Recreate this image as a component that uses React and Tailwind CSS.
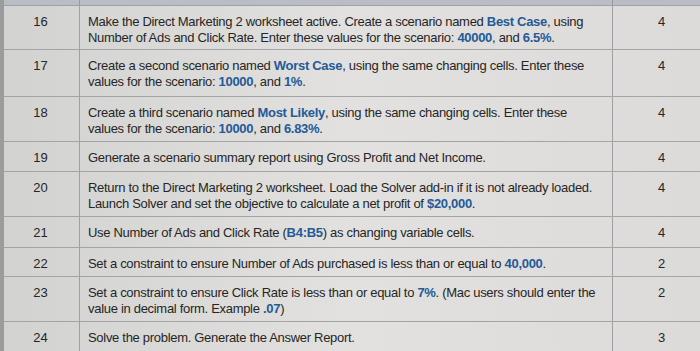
import React from 'react'

const B = ({ children }) => <span className="font-bold text-[#245a98]">{children}</span>

const rows = [
  {
    n: 16, h: 'h-[44px]', pts: 4,
    text: (
      <>
        Make the Direct Marketing 2 worksheet active. Create a scenario named <B>Best Case</B>, using
        <br />Number of Ads and Click Rate. Enter these values for the scenario: <B>40000</B>, and <B>6.5%</B>.
      </>
    ),
  },
  {
    n: 17, h: 'h-[47px]', pts: 4,
    text: (
      <>
        Create a second scenario named <B>Worst Case</B>, using the same changing cells. Enter these
        <br />values for the scenario: <B>10000</B>, and <B>1%</B>.
      </>
    ),
  },
  {
    n: 18, h: 'h-[45px]', pts: 4,
    text: (
      <>
        Create a third scenario named <B>Most Likely</B>, using the same changing cells. Enter these
        <br />values for the scenario: <B>10000</B>, and <B>6.83%</B>.
      </>
    ),
  },
  { n: 19, h: 'h-[30px]', pts: 4, text: <>Generate a scenario summary report using Gross Profit and Net Income.</> },
  {
    n: 20, h: 'h-[45px]', pts: 4,
    text: (
      <>
        Return to the Direct Marketing 2 worksheet. Load the Solver add-in if it is not already loaded.
        <br />Launch Solver and set the objective to calculate a net profit of <B>$20,000</B>.
      </>
    ),
  },
  { n: 21, h: 'h-[31px]', pts: 4, text: <>Use Number of Ads and Click Rate (<B>B4:B5</B>) as changing variable cells.</> },
  { n: 22, h: 'h-[29px]', pts: 2, text: <>Set a constraint to ensure Number of Ads purchased is less than or equal to <B>40,000</B>.</> },
  {
    n: 23, h: 'h-[45px]', pts: 2,
    text: (
      <>
        Set a constraint to ensure Click Rate is less than or equal to <B>7%</B>. (Mac users should enter the
        <br />value in decimal form. Example <B>.07</B>)
      </>
    ),
  },
  { n: 24, h: 'h-[30px]', pts: 3, text: <>Solve the problem. Generate the Answer Report.</> },
]

export default function App() {
  return (
    <div
      className="w-[700px] h-[351px] overflow-hidden flex bg-gradient-to-r from-[#d2d2d0] via-[#e2e1df] to-[#dcdbd9] text-[#262626] text-[13px] leading-[16px]"
      style={{ fontFamily: '"Liberation Sans", Arial, sans-serif' }}
    >
      <div className="w-[4px] shrink-0 bg-[#9c9c9c]" />
      <div className="flex-1 flex flex-col">
        <div className="h-[6px] shrink-0 flex bg-[#b9bdc4] border-b border-[#9da1a8]">
          <div className="w-[76px] border-r border-[#9a9a9a]" />
          <div className="w-[533px] border-r border-[#9a9a9a]" />
          <div className="flex-1" />
        </div>
        {rows.map((r) => (
          <div key={r.n} className={`flex shrink-0 border-b border-[#a4a4a4] ${r.h}`}>
            <div className="w-[76px] border-r border-[#a0a0a0] pt-[8px] text-center pr-[2px]">{r.n}</div>
            <div className="w-[533px] border-r border-[#a0a0a0] pt-[8px] pl-[8px] tracking-[-0.3px] whitespace-nowrap">
              {r.text}
            </div>
            <div className="flex-1 pt-[8px] pl-[45px]">{r.pts}</div>
          </div>
        ))}
      </div>
    </div>
  )
}
